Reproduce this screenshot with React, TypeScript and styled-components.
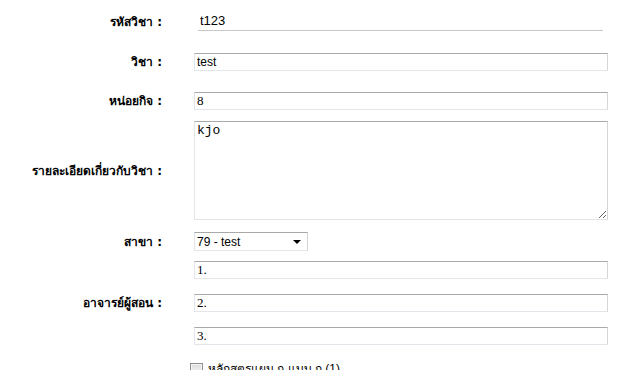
import React from "react";
import styled, { createGlobalStyle } from "styled-components";

const Global = createGlobalStyle`
  html, body { margin: 0; padding: 0; background: #fff; }
  body { font-family: Tahoma, "DejaVu Sans", "Noto Sans", sans-serif; overflow: hidden; }
`;

const Form = styled.div`
  width: 619px;
  height: 370px;
  overflow: hidden;
  display: flex;
  flex-direction: column;
`;

const Row = styled.div<{ $mt: number }>`
  display: grid;
  grid-template-columns: 162px 1fr;
  column-gap: 32px;
  align-items: center;
  margin-top: ${(p) => p.$mt}px;
  padding-right: 11px;
`;

const Label = styled.div`
  text-align: right;
  font-weight: bold;
  font-size: 12px;
  line-height: 16px;
  height: 16px;
  overflow: visible;
  color: #000;
  white-space: nowrap;
`;

const Plain = styled.div`
  margin: 0 5px 0 4px;
  height: 18px;
  border-bottom: 1px solid #c8c8c8;
  font-family: "Liberation Sans", Arial, sans-serif;
  font-size: 13px;
  line-height: 18px;
  padding-left: 2px;
  color: #000;
`;

const Input = styled.input<{ $serif?: boolean }>`
  box-sizing: border-box;
  display: block;
  width: 414px;
  height: 18px;
  margin: 0;
  padding: 0 2px;
  border: 1px solid #e2e6ea;
  border-top-color: #a9a9a9;
  border-right-color: #d6d6d6;
  font-family: ${(p) => (p.$serif ? '"Liberation Serif", "Times New Roman", serif' : '"Liberation Sans", Arial, sans-serif')};
  font-size: ${(p) => (p.$serif ? 13 : 12)}px;
  color: #000;
  outline: none;
`;

const Area = styled.textarea`
  box-sizing: border-box;
  width: 414px;
  height: 99px;
  margin: 0;
  padding: 1px 2px;
  border: 1px solid #e2e6ea;
  border-top-color: #a9a9a9;
  border-right-color: #d6d6d6;
  font-family: "Liberation Mono", "Courier New", monospace;
  font-size: 13px;
  color: #000;
  resize: both;
  outline: none;
  display: block;
`;

const SelectBox = styled.div`
  box-sizing: border-box;
  width: 114px;
  height: 19px;
  border: 1px solid #e2e6ea;
  border-top-color: #a9a9a9;
  border-right-color: #d6d6d6;
  display: flex;
  align-items: center;
  justify-content: space-between;
  padding: 0 6px 0 2px;
  font-family: "Liberation Sans", Arial, sans-serif;
  font-size: 12px;
  color: #000;
`;

const Arrow = styled.span`
  width: 0;
  height: 0;
  border-left: 4px solid transparent;
  border-right: 4px solid transparent;
  border-top: 4px solid #000;
`;

const Stack = styled.div`
  display: flex;
  flex-direction: column;
  gap: 15px;
`;

const CheckRow = styled.div`
  display: flex;
  align-items: center;
  gap: 5px;
  margin: 17px 0 0 190px;
  height: 14px;
  font-family: "Liberation Sans", Arial, sans-serif;
  font-size: 12px;
  line-height: 14px;
`;

const Check = styled.span`
  box-sizing: border-box;
  flex: none;
  width: 13px;
  height: 13px;
  border: 1px solid #8f8f8f;
  background: linear-gradient(#dcdcdc, #fafafa);
  box-shadow: inset 0 0 0 1px #f4f4f4;
`;

export default function App() {
  return (
    <Form>
      <Global />
      <Row $mt={12}>
        <Label>รหัสวิชา :</Label>
        <Plain>t123</Plain>
      </Row>
      <Row $mt={22}>
        <Label>วิชา :</Label>
        <Input defaultValue="test" />
      </Row>
      <Row $mt={21}>
        <Label>หน่อยกิจ :</Label>
        <Input $serif defaultValue="8" />
      </Row>
      <Row $mt={11}>
        <Label>รายละเอียดเกี่ยวกับวิชา :</Label>
        <Area defaultValue="kjo" />
      </Row>
      <Row $mt={12}>
        <Label>สาขา :</Label>
        <SelectBox>
          <span>79 - test</span>
          <Arrow />
        </SelectBox>
      </Row>
      <Row $mt={10}>
        <Label>อาจารย์ผู้สอน :</Label>
        <Stack>
          <Input $serif defaultValue="1." />
          <Input $serif defaultValue="2." />
          <Input $serif defaultValue="3." />
        </Stack>
      </Row>
      <CheckRow>
        <Check />
        <span>หลักสูตรแผน ก แบบ ก (1)</span>
      </CheckRow>
    </Form>
  );
}
